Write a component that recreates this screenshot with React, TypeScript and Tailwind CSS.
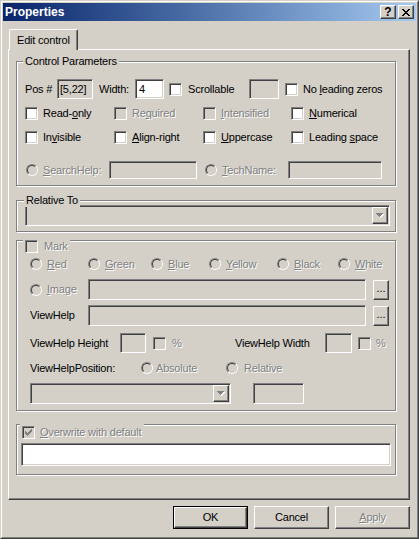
import React from "react";

type Kids = { children?: React.ReactNode };

const DIS = "text-[#808080] [text-shadow:1px_1px_0_#fff]";

function Sunken({ className = "", white = false, children }: { className?: string; white?: boolean } & Kids) {
  return (
    <div
      className={`box-border shrink-0 border border-t-[#808080] border-l-[#808080] border-b-white border-r-white shadow-[inset_1px_1px_0_#404040,inset_-1px_-1px_0_#d4d0c8] ${
        white ? "bg-white" : "bg-[#d4d0c8]"
      } ${className}`}
    >
      {children}
    </div>
  );
}

function Raised({ className = "", children }: { className?: string } & Kids) {
  return (
    <div
      className={`box-border shrink-0 border border-t-white border-l-white border-b-[#404040] border-r-[#404040] shadow-[inset_-1px_-1px_0_#808080] bg-[#d4d0c8] flex items-center justify-center ${className}`}
    >
      {children}
    </div>
  );
}

const CHECK = ["......X", ".....XX", "X...XXX", "XX.XXX.", "XXXXX..", ".XXX...", "..X...."];
const XG = ["XX....XX", ".XX..XX.", "..XXXX..", "...XX...", "..XXXX..", ".XX..XX.", "XX....XX"];

function Pix({ rows, color, className = "" }: { rows: string[]; color: string; className?: string }) {
  const rects: React.ReactNode[] = [];
  rows.forEach((row, y) =>
    row.split("").forEach((c, x) => {
      if (c === "X") rects.push(<rect key={`${x}-${y}`} x={x} y={y} width="1" height="1" fill={color} />);
    })
  );
  return (
    <svg
      width={rows[0].length}
      height={rows.length}
      viewBox={`0 0 ${rows[0].length} ${rows.length}`}
      shapeRendering="crispEdges"
      className={className}
    >
      {rects}
    </svg>
  );
}

function Check({ disabled = false, checked = false }: { disabled?: boolean; checked?: boolean }) {
  return (
    <Sunken white={!disabled} className="relative w-[13px] h-[13px]">
      {checked && <Pix rows={CHECK} color={disabled ? "#808080" : "#000"} className="absolute left-[2px] top-[2px]" />}
    </Sunken>
  );
}

function Radio({ disabled = true }: { disabled?: boolean }) {
  return (
    <div className="box-border shrink-0 w-[12px] h-[12px] rounded-full border border-t-[#808080] border-l-[#808080] border-b-white border-r-white">
      <div
        className={`box-border w-full h-full rounded-full border border-t-[#404040] border-l-[#404040] border-b-[#d4d0c8] border-r-[#d4d0c8] ${
          disabled ? "bg-[#d4d0c8]" : "bg-white"
        }`}
      />
    </div>
  );
}

function Arrow({ disabled = true }: { disabled?: boolean }) {
  return (
    <svg width="8" height="5" viewBox="0 0 8 5" shapeRendering="crispEdges">
      {disabled && <path d="M1 1h7v1h-1v1h-1v1h-1v1h-1v-1h-1v-1h-1v-1h-1z" fill="#fff" />}
      <path d="M0 0h7v1h-1v1h-1v1h-1v1h-1v-1h-1v-1h-1v-1h-1z" fill={disabled ? "#808080" : "#000"} />
    </svg>
  );
}

function Combo({ className = "" }: { className?: string }) {
  return (
    <Sunken className={`flex justify-end py-[1px] pr-[1px] ${className}`}>
      <Raised className="w-[16px] h-full">
        <Arrow />
      </Raised>
    </Sunken>
  );
}

function Dots() {
  return (
    <Raised className="w-[16px] h-[20px] ml-[7px]">
      <span className="text-[11px] leading-[11px] tracking-normal pb-[2px]">...</span>
    </Raised>
  );
}

function Group({ className = "", children }: { className?: string } & Kids) {
  return (
    <div
      className={`relative box-border shrink-0 w-[380px] border border-[#808080] shadow-[inset_1px_1px_0_#fff,1px_1px_0_#fff] flex flex-col ${className}`}
    >
      {children}
    </div>
  );
}

function CB({ label, disabled = false, w = "" }: { label: React.ReactNode; disabled?: boolean; w?: string }) {
  return (
    <div className={`flex items-center ${w}`}>
      <Check disabled={disabled} />
      <span className={`ml-[5px] whitespace-nowrap ${disabled ? DIS : ""}`}>{label}</span>
    </div>
  );
}

function RB({ label, w = "", gap = "ml-[5px]" }: { label: React.ReactNode; w?: string; gap?: string }) {
  return (
    <div className={`flex items-center ${w}`}>
      <Radio />
      <span className={`${gap} whitespace-nowrap ${DIS}`}>{label}</span>
    </div>
  );
}

const U = ({ children }: Kids) => <u className="underline">{children}</u>;

export default function App() {
  return (
    <div className="w-[419px] h-[539px] box-border border border-t-[#d4d0c8] border-l-[#d4d0c8] border-b-[#404040] border-r-[#404040] bg-[#d4d0c8] font-['Liberation_Sans',Arial,sans-serif] text-[11px] leading-[13px] tracking-[-0.2px] text-black select-none">
      <div className="h-full box-border border border-t-white border-l-white border-b-[#808080] border-r-[#808080] p-[1px] flex flex-col">
        {/* Title bar */}
        <div className="h-[18px] shrink-0 flex items-center bg-linear-to-r from-[#0a246a] to-[#a6caf0] pl-[2px] pr-[2px]">
          <span className="text-white font-bold text-[12px] tracking-normal">Properties</span>
          <div className="ml-auto flex gap-[2px]">
            <Raised className="w-[16px] h-[14px]">
              <span className="font-bold text-[12px] leading-none tracking-normal">?</span>
            </Raised>
            <Raised className="w-[16px] h-[14px]">
              <Pix rows={XG} color="#000" />
            </Raised>
          </div>
        </div>

        <div className="flex-1 flex flex-col pl-[5px] pr-[6px] pt-[8px] pb-[7px]">
          {/* Tab strip */}
          <div className="flex">
            <div className="relative z-10 ml-[1px] -mb-[1px] h-[21px] w-[69px] box-border border-t border-l border-r border-t-white border-l-white border-r-[#404040] shadow-[inset_-1px_0_0_#808080] bg-[#d4d0c8] pl-[7px] flex items-center rounded-tl-[2px] rounded-tr-[2px]">
              Edit control
            </div>
          </div>

          {/* Tab panel */}
          <div className="h-[451px] shrink-0 box-border border border-t-white border-l-white border-b-[#404040] border-r-[#404040] shadow-[inset_-1px_-1px_0_#808080] pl-[7px] pt-[11px] flex flex-col">
            {/* Control Parameters */}
            <Group className="h-[125px]">
              <span className="absolute -top-[7px] left-[6px] px-[2px] bg-[#d4d0c8]">Control Parameters</span>
              <div className="flex items-center h-[20px] mt-[17px] pl-[8px]">
                <span className="w-[32px]">Pos #</span>
                <Sunken className="w-[36px] h-[20px] pl-[2px] flex items-center">[5,22]</Sunken>
                <span className="ml-[6px] w-[36px]">Width:</span>
                <Sunken white className="w-[29px] h-[20px] pl-[3px] flex items-center">
                  4
                </Sunken>
                <div className="ml-[5px]">
                  <Check />
                </div>
                <span className="ml-[6px] w-[61px]">Scrollable</span>
                <Sunken className="w-[30px] h-[20px]" />
                <div className="ml-[6px]">
                  <Check />
                </div>
                <span className="ml-[5px] whitespace-nowrap">
                  No <U>l</U>eading zeros
                </span>
              </div>
              <div className="flex items-center h-[13px] mt-[8px] pl-[8px]">
                <CB w="w-[89px]" label={<>Read-<U>o</U>nly</>} />
                <CB w="w-[89px]" disabled label={<>Re<U>q</U>uired</>} />
                <CB w="w-[88px]" disabled label={<><U>I</U>ntensified</>} />
                <CB label={<><U>N</U>umerical</>} />
              </div>
              <div className="flex items-center h-[13px] mt-[11px] pl-[8px]">
                <CB w="w-[89px]" label={<>In<U>v</U>isible</>} />
                <CB w="w-[89px]" label={<><U>A</U>lign-right</>} />
                <CB w="w-[88px]" label={<><U>U</U>ppercase</>} />
                <CB label={<>Leading <U>s</U>pace</>} />
              </div>
              <div className="flex items-center h-[18px] mt-[17px] pl-[9px]">
                <RB w="w-[83px]" label={<><U>S</U>earchHelp:</>} />
                <Sunken className="w-[88px] h-[18px]" />
                <RB w="ml-[8px] w-[83px]" label={<><U>T</U>echName:</>} />
                <Sunken className="w-[94px] h-[18px]" />
              </div>
            </Group>

            {/* Relative To */}
            <Group className="h-[32px] mt-[14px]">
              <span className="absolute -top-[7px] left-[7px] px-[2px] bg-[#d4d0c8]">Relative To</span>
              <div className="mt-[4px] pl-[8px]">
                <Combo className="w-[365px] h-[21px]" />
              </div>
            </Group>

            {/* Mark */}
            <Group className="h-[171px] mt-[8px]">
              <div className="absolute -top-[1px] left-[6px] pl-[2px] pr-[2px] bg-[#d4d0c8] flex items-center h-[13px]">
                <Check disabled />
                <span className={`ml-[6px] ${DIS}`}>Mark</span>
              </div>
              <div className="flex items-center h-[12px] mt-[17px] pl-[13px]">
                <RB w="w-[58px]" label={<><U>R</U>ed</>} />
                <RB w="w-[63px]" label={<><U>G</U>reen</>} />
                <RB w="w-[58px]" label={<><U>B</U>lue</>} />
                <RB w="w-[68px]" label={<><U>Y</U>ellow</>} />
                <RB w="w-[61px]" label={<><U>B</U>lack</>} />
                <RB label={<><U>W</U>hite</>} />
              </div>
              <div className="flex items-center h-[21px] mt-[9px] pl-[13px]">
                <RB w="w-[58px]" label={<><U>I</U>mage</>} />
                <Sunken className="w-[278px] h-[21px]" />
                <Dots />
              </div>
              <div className="flex items-center h-[21px] mt-[5px] pl-[13px]">
                <span className="w-[58px]">ViewHelp</span>
                <Sunken className="w-[278px] h-[21px]" />
                <Dots />
              </div>
              <div className="flex items-center h-[20px] mt-[7px] pl-[13px]">
                <div className="w-[205px] flex items-center">
                  <span className="w-[90px] whitespace-nowrap">ViewHelp Height</span>
                  <Sunken className="w-[26px] h-[20px]" />
                  <div className="ml-[7px]">
                    <Check disabled />
                  </div>
                  <span className={`ml-[6px] ${DIS}`}>%</span>
                </div>
                <span className="w-[90px] whitespace-nowrap">ViewHelp Width</span>
                <Sunken className="w-[27px] h-[20px]" />
                <div className="ml-[6px]">
                  <Check disabled />
                </div>
                <span className={`ml-[5px] ${DIS}`}>%</span>
              </div>
              <div className="flex items-center h-[12px] mt-[9px] pl-[13px]">
                <span className="w-[111px] whitespace-nowrap">ViewHelpPosition:</span>
                <RB w="w-[85px]" gap="ml-[3px]" label="Absolute" />
                <RB gap="ml-[6px]" label="Relative" />
              </div>
              <div className="flex items-center h-[21px] mt-[9px] pl-[13px]">
                <Combo className="w-[201px] h-[21px]" />
                <Sunken className="ml-[22px] w-[51px] h-[21px]" />
              </div>
            </Group>

            {/* Overwrite with default */}
            <Group className="h-[51px] mt-[13px]">
              <div className="absolute -top-[1px] left-[3px] pl-[2px] pr-[3px] pt-[2px] bg-[#d4d0c8] flex items-center">
                <Check disabled checked />
                <span className={`ml-[5px] whitespace-nowrap ${DIS}`}>
                  <U>O</U>verwrite with default
                </span>
              </div>
              <div className="mt-[18px] pl-[4px]">
                <Sunken white className="w-[370px] h-[23px]" />
              </div>
            </Group>
          </div>

          {/* Buttons */}
          <div className="mt-[6px] flex justify-end gap-[6px]">
            <div className="w-[75px] h-[23px] box-border border border-black">
              <Raised className="w-full h-full">OK</Raised>
            </div>
            <Raised className="w-[75px] h-[23px]">Cancel</Raised>
            <Raised className="w-[75px] h-[23px]">
              <span className={DIS}>
                <U>A</U>pply
              </span>
            </Raised>
          </div>
        </div>
      </div>
    </div>
  );
}
